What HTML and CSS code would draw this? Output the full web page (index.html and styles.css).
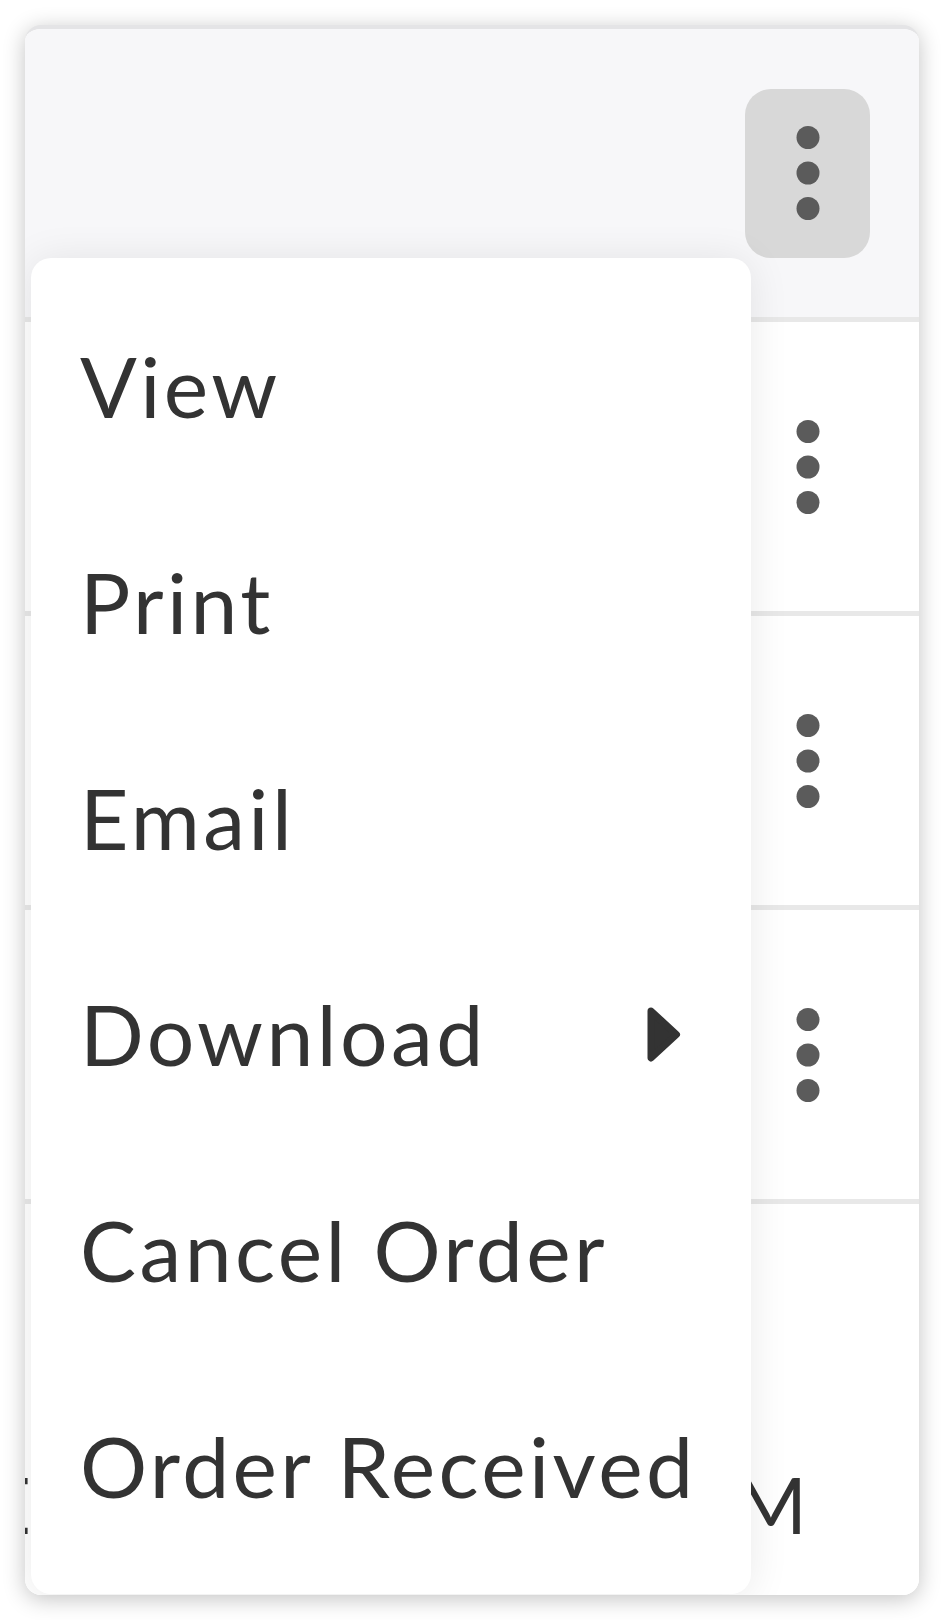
FILE: index.html
```html
<!DOCTYPE html>
<html lang="en">
<head>
<meta charset="utf-8">
<title>Orders</title>
<link rel="stylesheet" href="styles.css">
</head>
<body>
<div class="card">
  <div class="row row-head">
    <button class="kebab kebab-active" aria-label="More actions">
      <svg class="dots" viewBox="0 0 24 96" width="24" height="96"><circle cx="12" cy="12.5" r="11.5"/><circle cx="12" cy="48" r="11.5"/><circle cx="12" cy="83.5" r="11.5"/></svg>
    </button>
  </div>
  <div class="row">
    <button class="kebab" aria-label="More actions">
      <svg class="dots" viewBox="0 0 24 96" width="24" height="96"><circle cx="12" cy="12.5" r="11.5"/><circle cx="12" cy="48" r="11.5"/><circle cx="12" cy="83.5" r="11.5"/></svg>
    </button>
  </div>
  <div class="row">
    <button class="kebab" aria-label="More actions">
      <svg class="dots" viewBox="0 0 24 96" width="24" height="96"><circle cx="12" cy="12.5" r="11.5"/><circle cx="12" cy="48" r="11.5"/><circle cx="12" cy="83.5" r="11.5"/></svg>
    </button>
  </div>
  <div class="row">
    <button class="kebab" aria-label="More actions">
      <svg class="dots" viewBox="0 0 24 96" width="24" height="96"><circle cx="12" cy="12.5" r="11.5"/><circle cx="12" cy="48" r="11.5"/><circle cx="12" cy="83.5" r="11.5"/></svg>
    </button>
  </div>
  <div class="row row-last">
    <div class="cell-clip"><span>DUE</span></div>
    <div class="cell-time">10:30 PM</div>
  </div>

  <ul class="menu">
    <li class="menu-item">View</li>
    <li class="menu-item">Print</li>
    <li class="menu-item">Email</li>
    <li class="menu-item">Download
      <svg class="caret" viewBox="0 0 34 55" width="34" height="55"><path d="M4 4 L29.5 27.5 L4 51 Z"/></svg>
    </li>
    <li class="menu-item">Cancel Order</li>
    <li class="menu-item">Order Received</li>
  </ul>
</div>
</body>
</html>
```

FILE: styles.css
```css
html, body {
  margin: 0;
  padding: 0;
  background: #ffffff;
}

body {
  font-family: "Lato", "Open Sans", sans-serif;
  color: #333333;
}

.card {
  position: relative;
  margin: 25px;
  width: 894px;
  height: 1570px;
  box-sizing: border-box;
  border-top: 4px solid #e4e4e6;
  border-radius: 16px;
  background: #ffffff;
  overflow: hidden;
  box-shadow: 0 4px 22px rgba(0, 0, 0, 0.24);
  display: flex;
  flex-direction: column;
}

.row {
  height: 289px;
  flex: none;
  border-bottom: 5px solid #e8e8e8;
  display: flex;
  align-items: center;
  justify-content: flex-end;
  padding-right: 49px;
  background: #ffffff;
}

.row-head {
  height: 288px;
  background: #f7f7f9;
}

.row-last {
  flex: 1;
  height: auto;
  border-bottom: 0;
  align-items: flex-end;
  justify-content: space-between;
  padding: 0 110px 43px 0;
}

.kebab {
  width: 125px;
  height: 169px;
  border: 0;
  padding: 0;
  margin: 0;
  border-radius: 26px;
  background: transparent;
  display: flex;
  align-items: center;
  justify-content: center;
}

.kebab-active {
  background: #d8d8d8;
}

.dots {
  display: block;
  fill: #5b5b5b;
}

.cell-clip {
  width: 6px;
  display: flex;
  justify-content: flex-end;
  white-space: nowrap;
  font-size: 78px;
  line-height: 1.2;
}

.cell-time {
  white-space: nowrap;
  font-size: 78px;
  line-height: 1.2;
  letter-spacing: 2px;
}

.menu {
  position: absolute;
  left: 6px;
  top: 229px;
  width: 720px;
  margin: 0;
  padding: 20px 0;
  list-style: none;
  background: #ffffff;
  border-radius: 20px;
  box-shadow: 0 2px 40px rgba(0, 0, 0, 0.09);
  display: flex;
  flex-direction: column;
}

.menu-item {
  height: 216px;
  display: flex;
  align-items: center;
  justify-content: space-between;
  padding: 0 70px 0 49px;
  font-size: 84px;
  line-height: 1.2;
  letter-spacing: 3.4px;
  white-space: nowrap;
}

.caret {
  display: block;
  fill: #333333;
  stroke: #333333;
  stroke-width: 7;
  stroke-linejoin: round;
}
```
